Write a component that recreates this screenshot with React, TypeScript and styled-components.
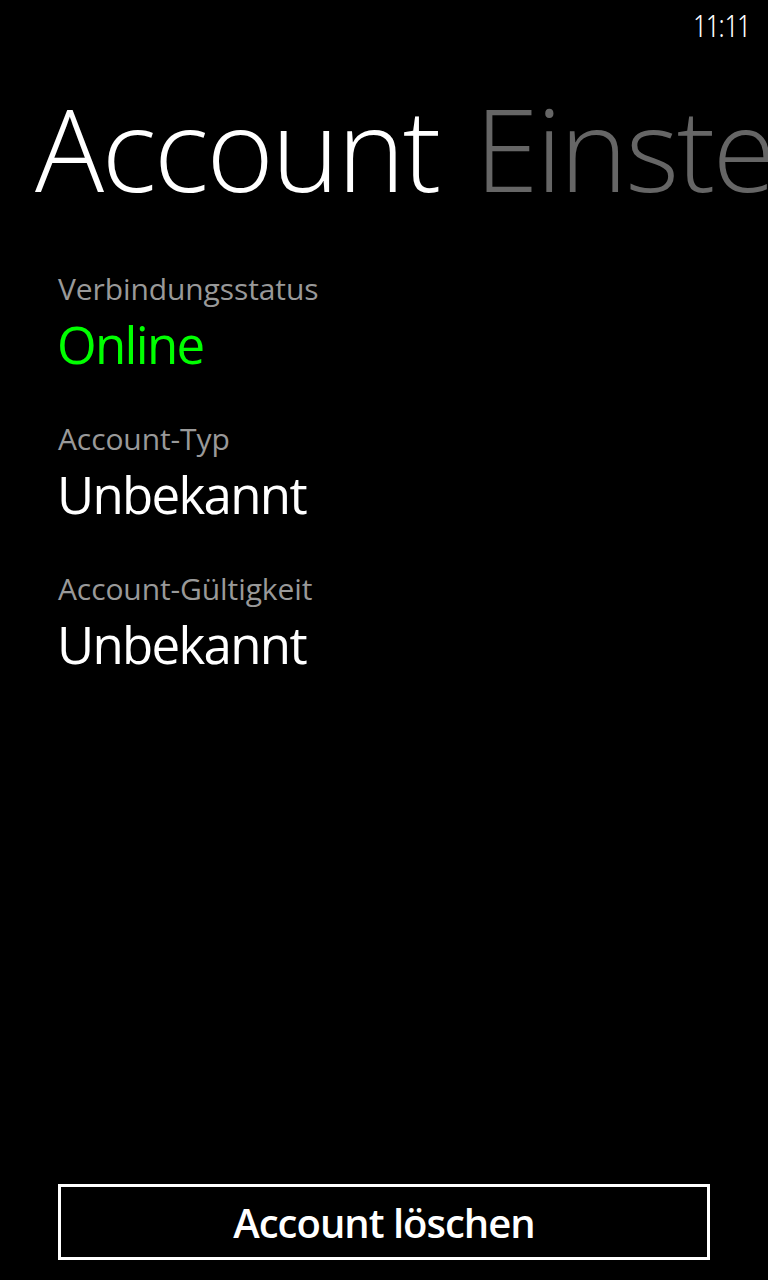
import React from "react";
import styled, { createGlobalStyle } from "styled-components";

const GlobalStyle = createGlobalStyle`
  html, body {
    margin: 0;
    padding: 0;
    background: #000;
  }
  body {
    font-family: "Open Sans", "Noto Sans", sans-serif;
    color: #fff;
  }
`;

const Screen = styled.div`
  width: 768px;
  height: 1280px;
  background: #000;
  display: flex;
  flex-direction: column;
  overflow: hidden;
`;

const StatusBar = styled.div`
  height: 50px;
  display: flex;
  justify-content: flex-end;
  align-items: center;
  padding-right: 18px;
`;

const Clock = styled.span`
  font-family: "Open Sans", sans-serif;
  font-size: 31px;
  font-weight: 300;
  font-stretch: 75%;
  color: #fff;
`;

const PivotHeader = styled.div`
  margin-top: 40px;
  padding-left: 35px;
  display: flex;
  gap: 36px;
  white-space: nowrap;
  font-size: 115px;
  line-height: 115px;
  font-weight: 300;
  letter-spacing: -2.3px;
`;

const PivotTitle = styled.span<{ $active?: boolean }>`
  color: ${(p) => (p.$active ? "#ffffff" : "#666666")};
`;

const Content = styled.div`
  margin-top: 64px;
  padding-left: 58px;
  display: flex;
  flex-direction: column;
  gap: 45px;
`;

const Field = styled.div`
  display: flex;
  flex-direction: column;
  gap: 5px;
`;

const Label = styled.div`
  font-size: 30px;
  line-height: 40px;
  color: #999999;
  letter-spacing: -0.1px;
`;

const Value = styled.div<{ $color?: string }>`
  font-size: 51px;
  line-height: 60px;
  letter-spacing: -1.7px;
  margin-left: -1px;
  color: ${(p) => p.$color ?? "#ffffff"};
`;

const Footer = styled.div`
  margin-top: auto;
  padding: 0 58px 20px 58px;
`;

const Button = styled.button`
  width: 100%;
  height: 76px;
  box-sizing: border-box;
  border: 3px solid #fff;
  background: #000;
  color: #fff;
  font-family: "Open Sans", sans-serif;
  font-size: 40px;
  font-weight: 600;
  letter-spacing: -1px;
  display: flex;
  align-items: center;
  justify-content: center;
  padding: 0;
`;

export default function App() {
  return (
    <>
      <GlobalStyle />
      <Screen>
        <StatusBar>
          <Clock>11:11</Clock>
        </StatusBar>
        <PivotHeader>
          <PivotTitle $active>Account</PivotTitle>
          <PivotTitle>Einstellungen</PivotTitle>
        </PivotHeader>
        <Content>
          <Field>
            <Label>Verbindungsstatus</Label>
            <Value $color="#00ff00">Online</Value>
          </Field>
          <Field>
            <Label>Account-Typ</Label>
            <Value>Unbekannt</Value>
          </Field>
          <Field>
            <Label>Account-Gültigkeit</Label>
            <Value>Unbekannt</Value>
          </Field>
        </Content>
        <Footer>
          <Button>Account löschen</Button>
        </Footer>
      </Screen>
    </>
  );
}
